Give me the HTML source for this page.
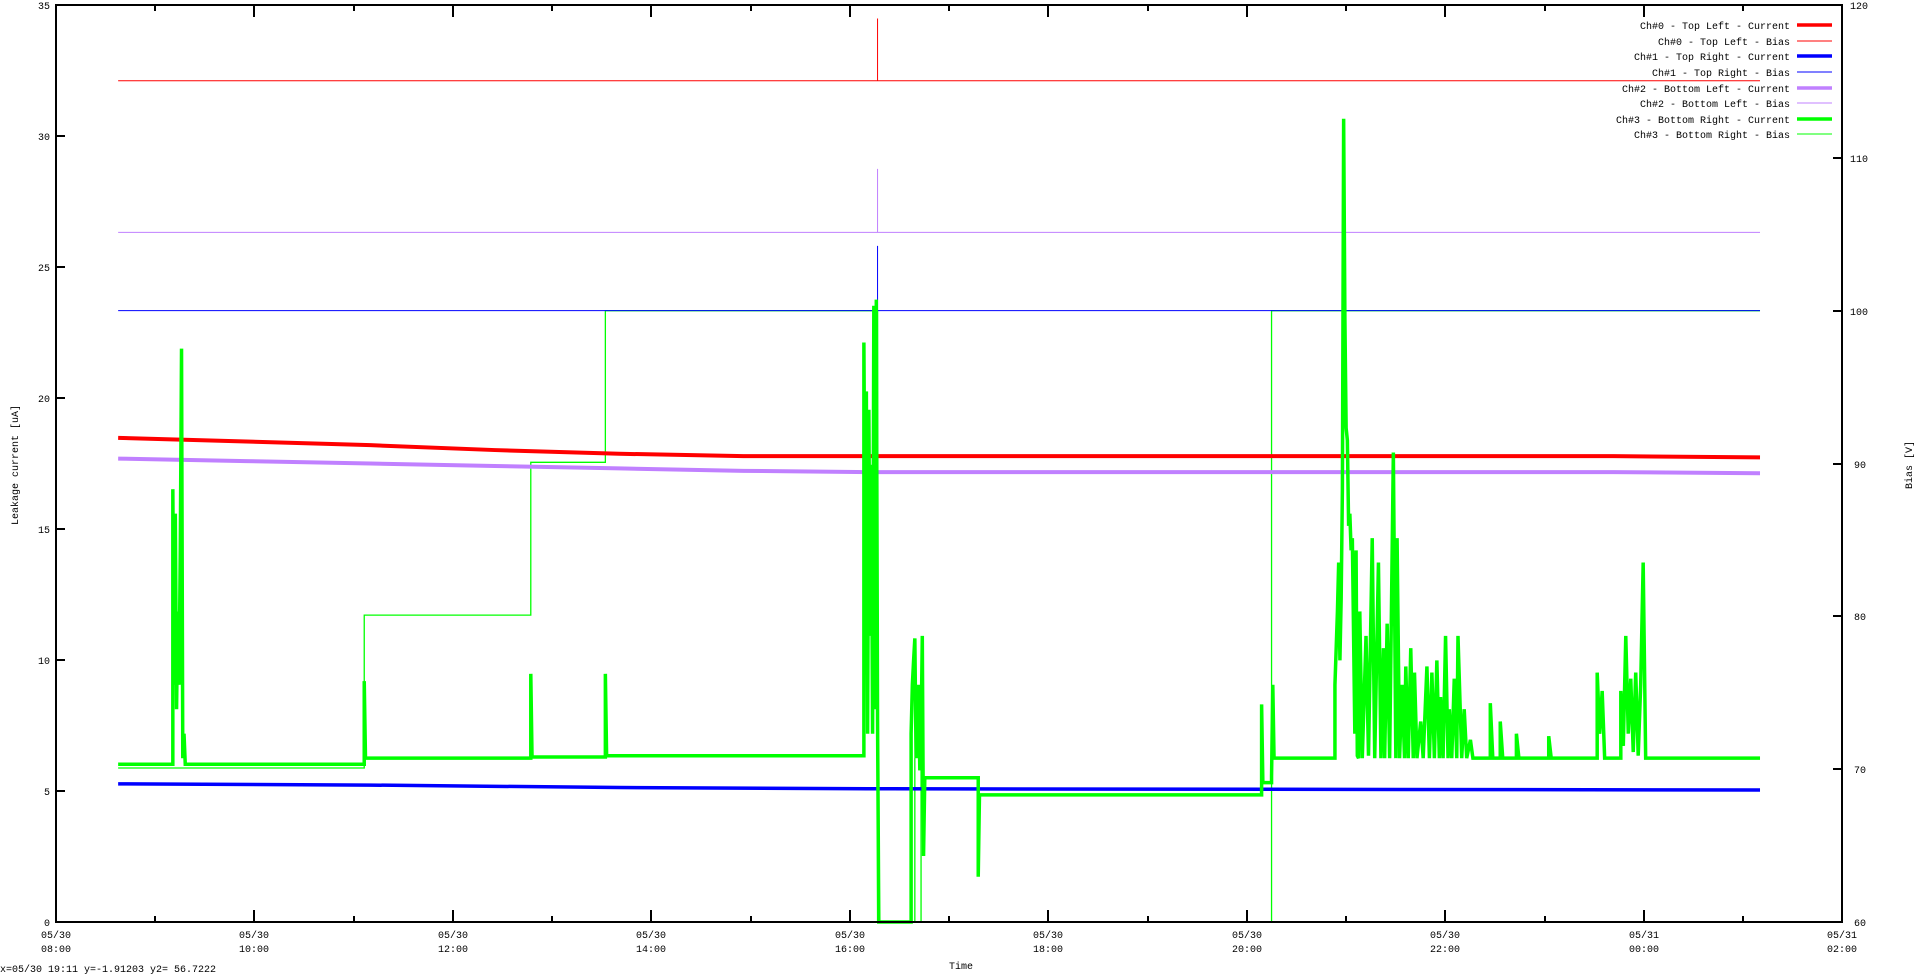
<!DOCTYPE html>
<html><head><meta charset="utf-8"><style>
html,body{margin:0;padding:0;background:#fff;width:1920px;height:977px;overflow:hidden}
svg text{font-family:"Liberation Mono",monospace;font-size:10px;fill:#000}
</style></head><body>
<svg width="1920" height="977" viewBox="0 0 1920 977" xmlns="http://www.w3.org/2000/svg">
<g transform="matrix(1.2429,0,0,1.2227,-2.42,0.11)" fill="none" stroke-linejoin="miter">
<path d="M97,66 H708 V15 V66 H1418" stroke="#ff0000" stroke-width="1" vector-effect="non-scaling-stroke"/>
<path d="M97,190 H708 V138 V190 H1418" stroke="#c080ff" stroke-width="1" vector-effect="non-scaling-stroke"/>
<path d="M97,628 H295 V503 H429 V378 H489 V254 H708 V754 H738 V620 V754 H743 V600 V754 H1025 V254 H1418" stroke="#00ff00" stroke-width="1.3" vector-effect="non-scaling-stroke"/>
<path d="M97,254 H708 V201 V254 H1418" stroke="#0000ff" stroke-width="1" vector-effect="non-scaling-stroke"/>
<path d="M97,358 L200,361 300,364 400,368 500,371 600,373 700,373 1300,373 1418,374" stroke="#ff0000" stroke-width="4" vector-effect="non-scaling-stroke"/>
<path d="M97,375 L200,377 300,379 400,381 500,383 600,385 700,386 1300,386 1418,387" stroke="#c080ff" stroke-width="4" vector-effect="non-scaling-stroke"/>
<path d="M97,641 L300,642 500,644 700,645 1418,646" stroke="#0000ff" stroke-width="3.5" vector-effect="non-scaling-stroke"/>
<path d="M97,625 H141 V400 L142,560 143,420 144,580 145,500 146,560 147,450 148,285 149,620 150,600 151,625 H295 V557 L296,620 H429 V551 L430,619 H489 V551 L490,618 H697 V280 L698,450 699,320 700,600 701,335 702,520 703,380 704,600 705,250 706,580 707,245 708,590 709,754 H735 V600 L736,560 737,540 738,522 739,620 740,600 741,560 742,630 743,600 744,520 745,700 746,636 H789 V717 L790,650 H1017 V576 L1018,640 H1025 V635 L1026,560 1027,620 H1076 V560 L1077,530 1078,500 1079,460 1080,540 1081,490 1082,400 1083,97 1084,260 1085,350 1086,360 1087,430 1088,420 1089,450 1090,440 1091,520 1092,600 1093,450 1094,618 1095,620 1096,500 1098,620 1101,520 1103,618 1106,440 1108,620 1111,460 1113,620 1115,530 1116,620 1118,510 1120,620 1123,370 1125,620 1126,440 1128,620 1130,560 1132,620 1133,545 1135,620 1137,530 1139,620 1140,550 1142,620 1145,590 1147,620 1150,545 1152,620 1154,550 1156,620 1158,540 1160,620 1161,570 1163,620 1165,520 1167,620 1168,580 1170,620 1172,555 1174,620 1175,520 1178,620 1180,580 1182,620 1185,605 1187,620 H1201 V575 L1203,620 H1209 V590 L1211,620 H1222 V600 L1224,620 H1248 V602 L1250,620 H1287 V550 L1289,600 1291,565 1293,620 H1306 V565 L1308,610 1310,520 1312,600 1314,555 1316,615 1318,550 1320,618 1322,560 1324,460 1326,620 1327,620 H1418" stroke="#00ff00" stroke-width="3.5" vector-effect="non-scaling-stroke"/>
</g>
<rect x="56" y="5" width="1786" height="917" fill="none" stroke="#000" stroke-width="2"/>
<g stroke="#000" stroke-width="2">
<path d="M56,922h9M56,791h9M56,660h9M56,529h9M56,398h9M56,267h9M56,136h9M56,5h9"/>
<path d="M1842,922h-9M1842,769h-9M1842,616h-9M1842,464h-9M1842,311h-9M1842,158h-9M1842,5h-9"/>
<path d="M56,922v-12M254,922v-12M453,922v-12M651,922v-12M850,922v-12M1048,922v-12M1247,922v-12M1445,922v-12M1644,922v-12M1842,922v-12"/>
<path d="M155,922v-6M354,922v-6M552,922v-6M751,922v-6M949,922v-6M1148,922v-6M1346,922v-6M1545,922v-6M1743,922v-6"/>
<path d="M254,5v12M453,5v12M651,5v12M850,5v12M1048,5v12M1247,5v12M1445,5v12M1644,5v12"/>
<path d="M155,5v6M354,5v6M552,5v6M751,5v6M949,5v6M1148,5v6M1346,5v6M1545,5v6M1743,5v6"/>
</g>
<g text-anchor="end">
<text x="50" y="926">0</text><text x="50" y="795">5</text><text x="50" y="664">10</text><text x="50" y="533">15</text><text x="50" y="402">20</text><text x="50" y="271">25</text><text x="50" y="140">30</text><text x="50" y="9">35</text>
</g>
<g>
<text x="1854" y="926">60</text><text x="1854" y="773">70</text><text x="1854" y="620">80</text><text x="1854" y="468">90</text><text x="1850" y="315">100</text><text x="1850" y="162">110</text><text x="1850" y="9">120</text>
</g>
<g text-anchor="middle">
<text x="56" y="938">05/30</text><text x="56" y="952">08:00</text>
<text x="254" y="938">05/30</text><text x="254" y="952">10:00</text>
<text x="453" y="938">05/30</text><text x="453" y="952">12:00</text>
<text x="651" y="938">05/30</text><text x="651" y="952">14:00</text>
<text x="850" y="938">05/30</text><text x="850" y="952">16:00</text>
<text x="1048" y="938">05/30</text><text x="1048" y="952">18:00</text>
<text x="1247" y="938">05/30</text><text x="1247" y="952">20:00</text>
<text x="1445" y="938">05/30</text><text x="1445" y="952">22:00</text>
<text x="1644" y="938">05/31</text><text x="1644" y="952">00:00</text>
<text x="1842" y="938">05/31</text><text x="1842" y="952">02:00</text>
<text x="961" y="969">Time</text>
</g>
<text x="0" y="972">x=05/30 19:11 y=-1.91203 y2= 56.7222</text>
<text transform="translate(18,465) rotate(-90)" text-anchor="middle">Leakage current [uA]</text>
<text transform="translate(1912,465) rotate(-90)" text-anchor="middle">Bias [V]</text>
<g text-anchor="end">
<text x="1790" y="29">Ch#0 - Top Left - Current</text>
<text x="1790" y="45">Ch#0 - Top Left - Bias</text>
<text x="1790" y="60">Ch#1 - Top Right - Current</text>
<text x="1790" y="76">Ch#1 - Top Right - Bias</text>
<text x="1790" y="92">Ch#2 - Bottom Left - Current</text>
<text x="1790" y="107">Ch#2 - Bottom Left - Bias</text>
<text x="1790" y="123">Ch#3 - Bottom Right - Current</text>
<text x="1790" y="138">Ch#3 - Bottom Right - Bias</text>
</g>
<g>
<path d="M1797,25h35" stroke="#ff0000" stroke-width="3.5"/>
<path d="M1797,41h35" stroke="#ff0000" stroke-width="1"/>
<path d="M1797,56h35" stroke="#0000ff" stroke-width="3.5"/>
<path d="M1797,72h35" stroke="#0000ff" stroke-width="1"/>
<path d="M1797,88h35" stroke="#c080ff" stroke-width="3.5"/>
<path d="M1797,103h35" stroke="#c080ff" stroke-width="1"/>
<path d="M1797,119h35" stroke="#00ff00" stroke-width="3.5"/>
<path d="M1797,134h35" stroke="#00ff00" stroke-width="1"/>
</g>
</svg>
</body></html>
